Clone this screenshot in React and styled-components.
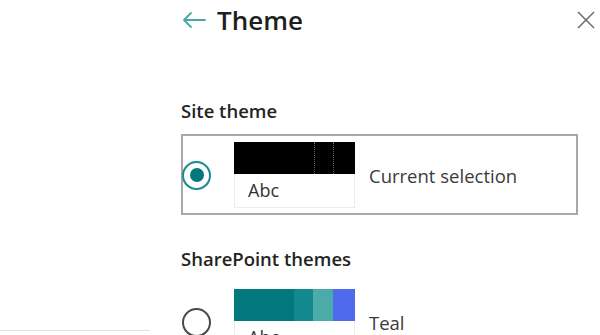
import React from "react";
import styled, { createGlobalStyle } from "styled-components";

const Global = createGlobalStyle`
  html, body { margin: 0; padding: 0; background: #ffffff; overflow: hidden; }
  body { font-family: "Open Sans", "Noto Sans", sans-serif; color: #323130; }
  * { box-sizing: border-box; }
`;

const Page = styled.div`
  display: flex;
  align-items: flex-start;
  width: 600px;
  height: 335px;
  overflow: hidden;
`;

const LeftPane = styled.div`
  flex: 0 0 150px;
  height: 331px;
  border-bottom: 1px solid #e3e3e3;
`;

const Panel = styled.div`
  flex: 1;
  padding: 0 22px 0 31px;
  display: flex;
  flex-direction: column;
  & > * { flex-shrink: 0; }
`;

const Header = styled.div`
  height: 40px;
  display: flex;
  align-items: center;
  margin-right: -17px;
`;

const BackButton = styled.button`
  border: 0;
  background: none;
  padding: 0;
  margin: 0 11px 0 1px;
  width: 24px;
  height: 18px;
  display: flex;
  align-items: center;
  color: #4aa6a9;
  cursor: pointer;
`;

const Title = styled.h1`
  margin: 0;
  flex: 1;
  font-size: 26px;
  line-height: 32px;
  font-weight: 600;
  color: #201f1e;
`;

const CloseButton = styled.button`
  border: 0;
  background: none;
  padding: 0;
  width: 18px;
  height: 18px;
  color: #6b6b6b;
  display: flex;
  cursor: pointer;
`;

const SectionLabel = styled.div`
  margin-top: ${(p) => p.$top}px;
  font-size: 18.5px;
  line-height: 20px;
  font-weight: 600;
  color: #252423;
`;

const Option = styled.div`
  margin-top: ${(p) => p.$top}px;
  border: 2px solid ${(p) => (p.$selected ? "#a8a8a8" : "transparent")};
  padding: 6px 0 5px 0;
  display: flex;
  align-items: center;
`;

const Radio = styled.span`
  flex: 0 0 29px;
  width: 29px;
  height: 29px;
  margin-left: -1px;
  border-radius: 50%;
  border: 2px solid ${(p) => (p.$checked ? "#1a8c90" : "#4a4a4a")};
  display: flex;
  align-items: center;
  justify-content: center;
  &::after {
    content: "";
    width: 14px;
    height: 14px;
    border-radius: 50%;
    background: ${(p) => (p.$checked ? "#03787c" : "transparent")};
  }
`;

const Swatch = styled.div`
  margin-left: 23px;
  width: 121px;
  display: flex;
  flex-direction: column;
`;

const ColorBar = styled.div`
  height: 32px;
  display: flex;
`;

const Segment = styled.span`
  flex: 0 0 ${(p) => p.$w}px;
  background: ${(p) => p.$c};
  border-left: ${(p) => (p.$divider ? "1px dotted rgba(140,140,140,0.7)" : "0")};
`;

const SampleText = styled.div`
  height: 34px;
  border: 1px solid #ececec;
  border-top: 0;
  padding-left: 13px;
  font-size: 18px;
  line-height: 32px;
  color: #333333;
`;

const OptionLabel = styled.div`
  margin-left: 14px;
  font-size: 18.5px;
  color: #3b3a39;
`;

const ArrowIcon = () => (
  <svg width="24" height="18" viewBox="0 0 24 18" fill="none" stroke="currentColor" strokeWidth="1.8" strokeLinecap="round" strokeLinejoin="round">
    <path d="M23 9H2M9 2L2 9l7 7" />
  </svg>
);

const CloseIcon = () => (
  <svg width="18" height="18" viewBox="0 0 18 18" fill="none" stroke="currentColor" strokeWidth="1.5">
    <path d="M1 1l16 16M17 1L1 17" />
  </svg>
);

const siteThemes = [
  {
    name: "Current selection",
    selected: true,
    top: 13,
    colors: [
      ["#000000", 60, false],
      ["#000000", 20, false],
      ["#000000", 19, true],
      ["#000000", 22, true],
    ],
  },
];

const spThemes = [
  {
    name: "Teal",
    selected: false,
    top: 12,
    colors: [
      ["#03787c", 60, false],
      ["#13898d", 19, false],
      ["#4aaba8", 20, false],
      ["#4f6bed", 22, false],
    ],
  },
];

const ThemeOption = ({ selected, top, colors, name }) => (
  <Option $selected={selected} $top={top}>
    <Radio $checked={selected} />
    <Swatch>
      <ColorBar>
        {colors.map(([c, w, d], i) => (
          <Segment key={i} $c={c} $w={w} $divider={d} />
        ))}
      </ColorBar>
      <SampleText>Abc</SampleText>
    </Swatch>
    <OptionLabel>{name}</OptionLabel>
  </Option>
);

export default function App() {
  return (
    <>
      <Global />
      <Page>
        <LeftPane />
        <Panel>
          <Header>
            <BackButton aria-label="Back">
              <ArrowIcon />
            </BackButton>
            <Title>Theme</Title>
            <CloseButton aria-label="Close">
              <CloseIcon />
            </CloseButton>
          </Header>
          <SectionLabel $top={61}>Site theme</SectionLabel>
          {siteThemes.map((t) => (
            <ThemeOption key={t.name} {...t} />
          ))}
          <SectionLabel $top={34}>SharePoint themes</SectionLabel>
          {spThemes.map((t) => (
            <ThemeOption key={t.name} {...t} />
          ))}
        </Panel>
      </Page>
    </>
  );
}
